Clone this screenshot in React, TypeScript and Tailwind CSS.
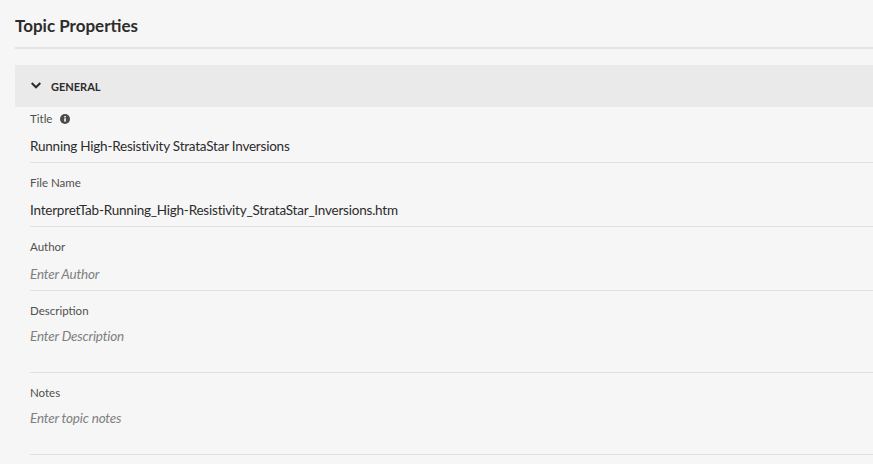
import React from "react";

function Field({ label, value, placeholder, cls, gap, info }: { label: string; value?: string; placeholder?: string; cls: string; gap: string; info?: boolean }) {
  return (
    <div className={`${cls} border-b border-[#e1e1e1] flex flex-col`}>
      <div className="h-[24px] flex items-center gap-[8px] text-[11.5px] leading-[16px] text-[#505050]">
        <span>{label}</span>
        {info && (
          <svg width="10" height="10" viewBox="0 0 10 10">
            <circle cx="5" cy="5" r="5" fill="#4b4b4b" />
            <rect x="4.2" y="4.2" width="1.7" height="3.4" fill="#f6f6f6" />
            <rect x="4.2" y="2" width="1.7" height="1.4" fill="#f6f6f6" />
          </svg>
        )}
      </div>
      {value ? (
        <div className={`${gap} text-[13.5px] tracking-[-0.22px] leading-[22px] text-[#2c2c2c]`}>{value}</div>
      ) : (
        <div className={`${gap} text-[13.5px] tracking-[-0.18px] leading-[22px] italic text-[#808080]`}>{placeholder}</div>
      )}
    </div>
  );
}

export default function App() {
  return (
    <div className="w-[873px] h-[464px] overflow-hidden bg-[#f6f6f6] pl-[15px] font-['Lato',sans-serif]">
      <div className="h-[49px] border-b-2 border-[#e4e4e4] pt-[14px] text-[17px] leading-[24px] font-bold text-[#2c2c2c]">
        Topic Properties
      </div>
      <div className="mt-[16px] h-[42px] bg-[#eaeaea] flex items-center pl-[16px] gap-[10px]">
        <svg width="10" height="8" viewBox="0 0 10 8" fill="none">
          <path d="M0.7 1 L5 5.3 L9.3 1" stroke="#2c2c2c" strokeWidth="2" />
        </svg>
        <span className="text-[11px] leading-[16px] mt-[1px] font-bold text-[#2c2c2c]">GENERAL</span>
      </div>
      <div className="pl-[15px]">
        <Field cls="h-[56px]" gap="mt-[4px]" label="Title" info value="Running High-Resistivity StrataStar Inversions" />
        <Field cls="h-[64px] pt-[8px]" gap="mt-[4px]" label="File Name" value="InterpretTab-Running_High-Resistivity_StrataStar_Inversions.htm" />
        <Field cls="h-[64px] pt-[8px]" gap="mt-[4px]" label="Author" placeholder="Enter Author" />
        <Field cls="h-[82px] pt-[8px]" gap="mt-[2px]" label="Description" placeholder="Enter Description" />
        <Field cls="h-[82px] pt-[8px]" gap="mt-[2px]" label="Notes" placeholder="Enter topic notes" />
      </div>
    </div>
  );
}
